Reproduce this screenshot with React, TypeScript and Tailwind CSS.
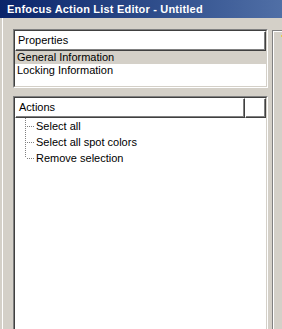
import React from 'react';

const rows = ['Select all', 'Select all spot colors', 'Remove selection'];

function TreeLine({ last }: { last: boolean }) {
  return (
    <svg width="10" height="16" className="shrink-0" shapeRendering="crispEdges">
      <line x1="0.5" y1="0" x2="0.5" y2={last ? 8 : 16} stroke="#808080" strokeDasharray="1 1" />
      <line x1="2" y1="8.5" x2="10" y2="8.5" stroke="#808080" strokeDasharray="1 1" />
    </svg>
  );
}

function Header({ children, extra }: { children: React.ReactNode; extra?: boolean }) {
  return (
    <div className="flex h-[20px] shrink-0">
      <div className="flex-1 border-t border-l border-t-white border-l-white border-b border-r border-b-[#404040] border-r-[#404040]">
        <div className="h-full border-b border-r border-b-[#808080] border-r-[#808080] flex items-center pl-[2px]">
          {children}
        </div>
      </div>
      {extra && (
        <div className="w-[21px] border-t border-l border-t-white border-l-white border-b border-r border-b-[#404040] border-r-[#404040]">
          <div className="h-full border-b border-r border-b-[#808080] border-r-[#808080]" />
        </div>
      )}
    </div>
  );
}

function Sunken({ className, children }: { className: string; children: React.ReactNode }) {
  return (
    <div className={`border-t border-l border-t-[#808080] border-l-[#808080] border-r border-r-white ${className}`}>
      <div className="h-full border-t border-l border-t-[#404040] border-l-[#404040] border-r border-r-[#d4d0c8] bg-white flex flex-col">
        {children}
      </div>
    </div>
  );
}

export default function App() {
  return (
    <div className="w-[282px] h-[329px] bg-[#d4d0c8] flex flex-col overflow-hidden font-['Liberation_Sans',Arial,sans-serif] text-[11px] text-black leading-none">
      <div className="h-[18px] shrink-0 bg-linear-to-r from-[#0a246a] to-[#506fa6] flex items-center pl-[7px]">
        <span className="text-white font-bold tracking-[0.2px]">Enfocus Action List Editor - Untitled</span>
      </div>
      <div className="flex flex-1 min-h-0">
        <div className="w-[3px] shrink-0 border-r border-r-white" />
        <div className="w-[265px] shrink-0 pl-[10px] pt-[11px] flex flex-col">
          <div className="h-[59px] shrink-0 border-t border-l border-t-[#808080] border-l-[#808080] border-b border-r border-b-white border-r-white">
            <div className="h-full border-t border-l border-t-[#404040] border-l-[#404040] border-b border-r border-b-[#d4d0c8] border-r-[#d4d0c8] bg-white flex flex-col">
              <Header>Properties</Header>
              <div className="h-[13px] bg-[#d4d0c8] flex items-center pl-[2px]">General Information</div>
              <div className="h-[13px] flex items-center pl-[2px]">Locking Information</div>
            </div>
          </div>
          <Sunken className="mt-[8px] flex-1">
            <Header extra>
              <span className="pl-[1px]">Actions</span>
            </Header>
            <div className="flex flex-col pl-[10px]">
              {rows.map((r, i) => (
                <div key={r} className="h-[16px] flex items-center">
                  <TreeLine last={i === rows.length - 1} />
                  <span className="ml-[1px]">{r}</span>
                </div>
              ))}
            </div>
          </Sunken>
        </div>
        <div className="w-[4px] shrink-0" />
        <div className="flex-1 mt-[12px] border-t border-l border-t-[#808080] border-l-[#808080]">
          <div className="h-full border-t border-l border-t-white border-l-white pl-[7px] pt-[3px]">
            <div className="w-[1px] h-[2px] bg-[#e8c850]" />
          </div>
        </div>
      </div>
    </div>
  );
}
